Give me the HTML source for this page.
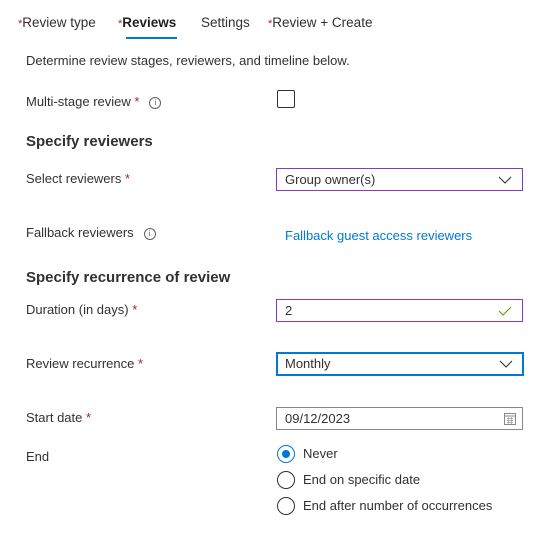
<!DOCTYPE html>
<html><head><style>
body{margin:0;width:553px;height:542px;background:#fff;font-family:"Liberation Sans",sans-serif;color:#323130;position:relative;overflow:hidden;font-size:13px}
.a{position:absolute;white-space:nowrap;line-height:16px}
.r{color:#a4262c}
.box{position:absolute;left:276px;width:245px;height:21px;border:1px solid #8a3ab9;box-sizing:content-box}
.box span{position:absolute;left:8px;top:3px;line-height:16px}
.chev{position:absolute;right:10px;top:4px}
.h{font-weight:bold;font-size:15px}
.rad{position:absolute;left:277px;width:18px;height:18px;border:1px solid #323130;border-radius:50%;box-sizing:border-box}
.info{display:inline-block;width:10px;height:10px;border:1px solid #605e5c;border-radius:50%;font-size:8px;line-height:10px;text-align:center;color:#605e5c;vertical-align:middle;margin-left:10px}
</style></head><body>
<div class="a" style="left:18px;top:15px;font-size:13.5px"><span class="r" style="font-size:11px">*</span>Review type</div>
<div class="a" style="left:118px;top:15px;font-size:13.5px;color:#201f1e"><span class="r" style="font-size:11px">*</span><b style="font-weight:600">Reviews</b></div>
<div style="position:absolute;left:126px;top:37px;width:51px;height:2px;background:#0078d4"></div>
<div class="a" style="left:201px;top:15px;font-size:13.5px">Settings</div>
<div class="a" style="left:268px;top:15px;font-size:13.5px"><span class="r" style="font-size:11px">*</span>Review + Create</div>
<div class="a" style="left:26px;top:53px">Determine review stages, reviewers, and timeline below.</div>
<div class="a" style="left:26px;top:94px">Multi-stage review <span class="r">*</span><span class="info">i</span></div>
<div style="position:absolute;left:277px;top:90px;width:18px;height:18px;border:1px solid #323130;border-radius:2px;box-sizing:border-box"></div>
<div class="a h" style="left:26px;top:134px">Specify reviewers</div>
<div class="a" style="left:26px;top:171px">Select reviewers <span class="r">*</span></div>
<div class="box" style="top:168px"><span>Group owner(s)</span><svg class="chev" width="14" height="14" viewBox="0 0 14 14"><path d="M1 4l6 6 6-6" fill="none" stroke="#323130" stroke-width="1.1"/></svg></div>
<div class="a" style="left:26px;top:225px">Fallback reviewers<span class="info">i</span></div>
<div class="a" style="left:285px;top:228px;color:#0078d4">Fallback guest access reviewers</div>
<div class="a h" style="left:26px;top:270px">Specify recurrence of review</div>
<div class="a" style="left:26px;top:302px">Duration (in days) <span class="r">*</span></div>
<div class="box" style="top:299px"><span>2</span><svg class="chev" width="14" height="14" viewBox="0 0 14 14"><path d="M1 7l4 4 8-8" fill="none" stroke="#57a300" stroke-width="1.1"/></svg></div>
<div class="a" style="left:26px;top:356px">Review recurrence <span class="r">*</span></div>
<div class="box" style="top:352px;border:2px solid #0078d4;left:276px;width:244px;height:20px"><span style="left:7px;top:2px">Monthly</span><svg class="chev" style="top:3px;right:9px" width="14" height="14" viewBox="0 0 14 14"><path d="M1 4l6 6 6-6" fill="none" stroke="#323130" stroke-width="1.1"/></svg></div>
<div class="a" style="left:26px;top:410px">Start date <span class="r">*</span></div>
<div class="box" style="top:407px;border-color:#8a8886"><span>09/12/2023</span><svg class="chev" style="top:4px;right:6px" width="12" height="13" viewBox="0 0 12 13"><rect x="0.5" y="1.5" width="11" height="11" fill="none" stroke="#8a8886"/><path d="M0.5 4h11" stroke="#8a8886"/><path d="M3 6.5h6M3 8.5h6M3 10.5h6M4.5 5v7M7.5 5v7" stroke="#a19f9d" stroke-width="0.7"/></svg></div>
<div class="a" style="left:26px;top:449px">End</div>
<div class="rad" style="top:445px;border-color:#0078d4"><div style="position:absolute;left:4px;top:4px;width:8px;height:8px;border-radius:50%;background:#0078d4"></div></div>
<div class="a" style="left:303px;top:446px">Never</div>
<div class="rad" style="top:471px"></div>
<div class="a" style="left:303px;top:472px">End on specific date</div>
<div class="rad" style="top:497px"></div>
<div class="a" style="left:303px;top:498px">End after number of occurrences</div>
</body></html>
